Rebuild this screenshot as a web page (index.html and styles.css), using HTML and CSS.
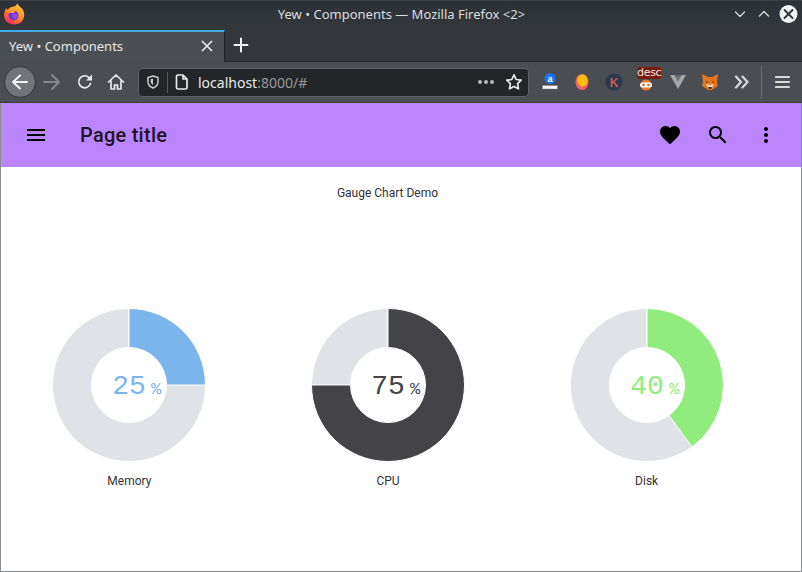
FILE: index.html
```html
<!DOCTYPE html>
<html lang="en">
<head>
<meta charset="utf-8">
<title>Yew • Components</title>
<link rel="stylesheet" href="styles.css">
</head>
<body>
<div class="window">
  <header class="titlebar">
    <svg class="ff-logo" width="22" height="22" viewBox="0 0 22 22">
      <defs>
        <linearGradient id="ffg" x1="0.8" y1="0" x2="0.2" y2="1"><stop offset="0" stop-color="#ffd43a"/><stop offset="0.5" stop-color="#ff8a2a"/><stop offset="1" stop-color="#f5225f"/></linearGradient>
      </defs>
      <path d="M14.500 0c.5 3 4 4.500 5.500 7 2.500 4.500 1 9.500-2 12.300-4 3-10.500 2.800-14-.3C1 16 .5 12 1.500 9c.4-1.500 1-3 2-4 .2 1 .5 1.500 1.200 2 1.300-2 3-3 5.300-3.300 2.500-.5 4-1.700 4.500-3.700z" fill="url(#ffg)"/>
      <circle cx="10.500" cy="12.500" r="5" fill="#6a35c9"/>
      <path d="M5 9c2-2.500 5.500-2.800 8-1.500l-2.500 2.500c-2 .3-4 0-5.500-1z" fill="#ff9a2e"/>
      <circle cx="12" cy="13" r="2.700" fill="#8f4be0"/>
    </svg>
    <span class="title-text">Yew • Components — Mozilla Firefox &lt;2&gt;</span>
    <div class="win-buttons">
      <svg class="win-btn" width="24" height="24" viewBox="0 0 24 24"><path d="M7.500 10 12 14.500 16.500 10" class="line-thin"/></svg>
      <svg class="win-btn" width="24" height="24" viewBox="0 0 24 24"><path d="M7.500 14 12 9.500 16.500 14" class="line-thin"/></svg>
      <svg class="win-btn" width="24" height="24" viewBox="0 0 24 24"><circle cx="12.500" cy="12" r="9" fill="#f2f3f3"/><path d="M8.500 8l8 8M16.500 8l-8 8" class="line-dark"/></svg>
    </div>
  </header>

  <div class="tabbar">
    <div class="tab">
      <span class="tab-label">Yew • Components</span>
      <svg width="12" height="12" viewBox="0 0 12 12"><path d="M1.500 1.500l9 9M10.500 1.500l-9 9" class="line-light"/></svg>
    </div>
    <svg class="new-tab" width="16" height="16" viewBox="0 0 16 16"><path d="M8 1.500v13M1.500 8h13" class="line-white"/></svg>
  </div>

  <nav class="navbar">
    <div class="nav-btn"><span class="back-circle">
      <svg width="20" height="20" viewBox="0 0 20 20"><path d="M17 10H3M10 3.500 3 10l7 6.500" class="line-white"/></svg>
    </span></div>
    <div class="nav-btn">
      <svg width="20" height="20" viewBox="0 0 20 20"><path d="M2 10h15M10 3l7 7-7 7" class="line-dim"/></svg>
    </div>
    <div class="nav-btn reload">
      <svg width="18" height="18" viewBox="0 0 18 18"><path d="M14.500 10.500A6 6 0 1 1 13 4.500l2 2" class="line-light"/><path d="M16 1.500v6h-6z" fill="#e8e9ea"/></svg>
    </div>
    <div class="nav-btn">
      <svg width="18" height="18" viewBox="0 0 18 18"><path d="M1.500 9 9 2l7.500 7M4 7.500V16h3.500v-4h3v4H14V7.500" class="line-light"/></svg>
    </div>
    <div class="urlbar">
      <svg class="url-shield" width="14" height="14" viewBox="0 0 14 14"><path d="M2 2.500 7 1l5 1.500v4c0 3-2 5.500-5 6.500-3-1-5-3.500-5-6.500z" class="line-gray"/><path d="M7 3.500v6.500c-1.500-.7-2.300-2-2.300-3.500V4.200z" fill="#c8c9ca"/></svg>
      <span class="url-divider"></span>
      <svg class="url-page" width="14" height="16" viewBox="0 0 14 16"><path d="M3 1h5l4 4v8.500a1.500 1.500 0 0 1-1.500 1.500h-7.500A1.500 1.500 0 0 1 1.500 13.500v-11A1.500 1.500 0 0 1 3 1zM8 1v4h4" class="line-light"/></svg>
      <span class="url-text">localhost<span class="url-dim">:8000/#</span></span>
      <span class="url-dots"><i></i><i></i><i></i></span>
      <svg class="url-star" width="18" height="18" viewBox="0 0 18 18"><path d="M9 1.800l2.200 4.700 5 .7-3.600 3.500.9 5.100L9 13.400l-4.500 2.400.9-5.100L1.800 7.200l5-.7z" class="line-light"/></svg>
    </div>
    <div class="ext">
      <svg width="20" height="20" viewBox="0 0 20 20"><circle cx="10" cy="6.500" r="5.500" fill="#1a73e8"/><text x="10" y="9.500" class="ext-a">a</text><rect x="2.500" y="13.500" width="15" height="3.500" fill="#fff" stroke="#777" stroke-width="0.500"/></svg>
    </div>
    <div class="ext">
      <svg width="20" height="20" viewBox="0 0 20 20"><ellipse cx="10" cy="10" rx="6.500" ry="8" fill="#f0616d"/><ellipse cx="10.500" cy="8.500" rx="5" ry="6" fill="#ffc107"/></svg>
    </div>
    <div class="ext">
      <svg width="20" height="20" viewBox="0 0 20 20"><circle cx="10" cy="10" r="8.500" fill="#2a3a4d"/><text x="10" y="14.500" class="ext-k">K</text></svg>
    </div>
    <div class="ext ext-desc">
      <svg width="18" height="12" viewBox="0 0 18 12"><circle cx="9" cy="6" r="5.500" fill="#e67a2b"/><rect x="3" y="3.500" width="12" height="5" rx="2.500" fill="#fff"/><circle cx="6.500" cy="6" r="1.300" fill="#d9691f"/><circle cx="11.500" cy="6" r="1.300" fill="#d9691f"/></svg>
      <span class="desc-badge">desc</span>
    </div>
    <div class="ext">
      <svg width="18" height="16" viewBox="0 0 18 16"><path d="M1 1h4.500L9 7l3.500-6H17L9 15z" fill="#a3a5a7"/><path d="M5.500 1H8l1 2 1-2h2.500L9 7z" fill="#6f7276"/></svg>
    </div>
    <div class="ext">
      <svg width="18" height="18" viewBox="0 0 18 18"><path d="M1 1l6 3h4l6-3-1 8 1 4-5 3-1 1H7l-1-1-5-3 1-4z" fill="#e2761b"/><path d="M5 11l4 1 4-1-2 4H7z" fill="#f6d7b8"/><path d="M7 14h4l-1 2H8z" fill="#3c2a1c"/><path d="M5 8l2 1-2 1zM13 8l-2 1 2 1z" fill="#3c2a1c"/></svg>
    </div>
    <div class="ext">
      <svg width="16" height="14" viewBox="0 0 16 14"><path d="M2 1.500 7 7l-5 5.500M8.500 1.500 13.500 7l-5 5.500" class="line-thick"/></svg>
    </div>
    <span class="nav-sep"></span>
    <div class="nav-btn">
      <svg width="16" height="14" viewBox="0 0 16 14"><path d="M1 2h13M1 7h13M1 12h13" class="line-thick"/></svg>
    </div>
  </nav>

  <div class="appbar">
    <svg class="app-menu" width="24" height="24" viewBox="0 0 24 24"><path d="M3 18h18v-2H3v2zm0-5h18v-2H3v2zm0-7v2h18V6H3z"/></svg>
    <span class="app-title">Page title</span>
    <div class="app-actions">
      <span class="app-action"><svg width="24" height="24" viewBox="0 0 24 24"><path d="M12 21.350l-1.450-1.320C5.400 15.360 2 12.280 2 8.500 2 5.420 4.420 3 7.500 3c1.740 0 3.410.810 4.500 2.090C13.090 3.810 14.760 3 16.500 3 19.580 3 22 5.420 22 8.500c0 3.780-3.400 6.860-8.550 11.540L12 21.350z"/></svg></span>
      <span class="app-action"><svg width="24" height="24" viewBox="0 0 24 24"><path d="M15.500 14h-.790l-.280-.270C15.410 12.590 16 11.110 16 9.500 16 5.910 13.090 3 9.500 3S3 5.910 3 9.500 5.910 16 9.500 16c1.610 0 3.090-.590 4.230-1.570l.270.280v.790l5 4.990L20.490 19l-4.990-5zm-6 0C7.010 14 5 11.990 5 9.500S7.010 5 9.500 5 14 7.010 14 9.500 11.990 14 9.500 14z"/></svg></span>
      <span class="app-action"><svg width="24" height="24" viewBox="0 0 24 24"><path d="M12 8c1.100 0 2-.9 2-2s-.9-2-2-2-2 .9-2 2 .9 2 2 2zm0 2c-1.100 0-2 .9-2 2s.9 2 2 2 2-.9 2-2-.9-2-2-2zm0 6c-1.100 0-2 .9-2 2s.9 2 2 2 2-.9 2-2-.9-2-2-2z"/></svg></span>
    </div>
  </div>

  <main class="content">
    <h1 class="chart-title">Gauge Chart Demo</h1>
    <div class="gauges">
      <figure class="gauge">
        <svg width="152" height="152" viewBox="-76 -76 152 152">
          <path class="track" d="M0-76.500A76.500 76.500 0 1 1-.01-76.500L-.01-37.500A37.500 37.500 0 1 0 0-37.500Z"/>
          <path class="seg blue" d="M0-76.500A76.500 76.500 0 0 1 76.500 0H37.500A37.500 37.500 0 0 0 0-37.500Z"/>
          <text class="val blue-t" x="0" y="9" text-anchor="middle">25</text>
          <text class="unit blue-t" x="22" y="9">%</text>
        </svg>
        <figcaption>Memory</figcaption>
      </figure>
      <figure class="gauge">
        <svg width="152" height="152" viewBox="-76 -76 152 152">
          <path class="track" d="M0-76.500A76.500 76.500 0 1 1-.01-76.500L-.01-37.500A37.500 37.500 0 1 0 0-37.500Z"/>
          <path class="seg dark" d="M0-76.500A76.500 76.500 0 1 1-76.500 0H-37.500A37.500 37.500 0 1 0 0-37.500Z"/>
          <text class="val dark-t" x="0" y="9" text-anchor="middle">75</text>
          <text class="unit dark-t" x="22" y="9">%</text>
        </svg>
        <figcaption>CPU</figcaption>
      </figure>
      <figure class="gauge">
        <svg width="152" height="152" viewBox="-76 -76 152 152">
          <path class="track" d="M0-76.500A76.500 76.500 0 1 1-.01-76.500L-.01-37.500A37.500 37.500 0 1 0 0-37.500Z"/>
          <path class="seg green" d="M0-76.500A76.500 76.500 0 0 1 44.970 61.890L22.040 30.340A37.500 37.500 0 0 0 0-37.500Z"/>
          <text class="val green-t" x="0" y="9" text-anchor="middle">40</text>
          <text class="unit green-t" x="22" y="9">%</text>
        </svg>
        <figcaption>Disk</figcaption>
      </figure>
    </div>
  </main>
</div>
</body>
</html>
```
FILE: styles.css
```css
* { box-sizing: border-box; }
html, body { margin: 0; padding: 0; }
body { width: 802px; height: 572px; overflow: hidden; background: #fff; font-family: "Noto Sans", sans-serif; }

.window { width: 802px; height: 572px; display: flex; flex-direction: column; border: 1px solid #8b8e91; border-top: 0; background: #fff; }

svg path[class^="line"] { fill: none; stroke-linecap: round; stroke-linejoin: round; }
.line-light { stroke: #e8e9ea; stroke-width: 1.700; }
.line-thin { stroke: #dfe0e1; stroke-width: 1.200; }
.line-dark { stroke: #2f3337; stroke-width: 1.800; }
.line-white { stroke: #f4f5f5; stroke-width: 2; }
.line-dim { stroke: #85888b; stroke-width: 2; }
.line-gray { stroke: #c8c9ca; stroke-width: 1.500; }
.line-thick { stroke: #d8d9da; stroke-width: 2.200; }

/* Title bar */
.titlebar { height: 30px; flex: none; margin: 0 -1px; display: grid; grid-template-columns: 1fr auto 1fr; align-items: center; padding: 0 2px 3px 3px; background: linear-gradient(#2c3137, #34383c); border-top: 1px solid #3d4147; }
.ff-logo { display: block; }
.title-text { color: #dcdedf; font-size: 13px; line-height: 26px; white-space: nowrap; }
.win-buttons { display: flex; justify-self: end; }
.win-btn { display: block; }

/* Tab bar */
.tabbar { height: 32px; flex: none; margin: 0 -1px; display: flex; align-items: stretch; background: #34383c; border-bottom: 1px solid #1f2225; }
.tab { width: 225px; margin-bottom: -1px; display: flex; align-items: center; justify-content: space-between; padding: 0 11px 2px 9px; background: #4b4f54; border-top: 2px solid #3daee9; border-right: 1px solid #1f2225; }
.tab-label { color: #e6e7e8; font-size: 13px; white-space: nowrap; }
.new-tab { align-self: center; margin: -1px 0 0 8px; }

/* Navigation bar */
.navbar { height: 41px; flex: none; margin: 0 -1px; display: flex; align-items: center; padding: 0 3px 0 4px; background: #4a4e53; border-bottom: 1px solid #3a3d41; }
.nav-btn, .ext { width: 32px; height: 32px; flex: none; display: flex; align-items: center; justify-content: center; }
.reload svg { margin-left: 2px; }
.back-circle { width: 32px; height: 32px; border-radius: 50%; background: #717478; border: 1px solid #313438; display: flex; align-items: center; justify-content: center; }
.urlbar { width: 391px; height: 29px; flex: none; margin: 0 5px 0 6px; display: flex; align-items: center; background: #232629; border: 1px solid #5e6165; border-radius: 4px; color: #e8e9ea; }
.url-shield { margin-left: 7px; flex: none; }
.url-divider { width: 1px; height: 21px; background: #55585c; margin: 0 7px; flex: none; }
.url-page { flex: none; margin-left: 0; }
.url-text { font-size: 14px; margin-left: 9px; flex: 1; white-space: nowrap; }
.url-dim { color: #96989a; }
.url-dots { display: flex; gap: 2px; flex: none; margin-right: 11px; }
.url-dots i { width: 4px; height: 4px; border-radius: 50%; background: #b8babb; display: block; }
.url-star { margin-right: 5px; flex: none; }
.ext { position: relative; }
.ext-a { font: bold 9px "Liberation Sans", sans-serif; fill: #fff; text-anchor: middle; }
.ext-k { font: bold 12px "Liberation Sans", sans-serif; fill: #c85a55; text-anchor: middle; }
.ext-desc svg { margin: 6px 0 0 -1px; }
.desc-badge { position: absolute; top: 1px; left: 7px; width: 24px; height: 12px; border-radius: 2px; background: #7a1c0c; color: #f3e6e3; font: 11px/11px "DejaVu Sans", sans-serif; letter-spacing: -0.300px; text-align: center; }
.nav-sep { width: 1px; height: 33px; background: #6b6e72; flex: none; margin: 0 5px 0 3px; }

/* App bar */
.appbar { height: 64px; flex: none; display: flex; align-items: center; padding: 0 11px 0 23px; background: #bb86fc; }
.appbar svg { display: block; fill: #000; }
.app-menu { flex: none; }
.app-title { margin-left: 32px; font: 500 20px/32px Roboto, sans-serif; letter-spacing: 0.250px; color: #1f1329; flex: 1; }
.app-actions { display: flex; flex: none; }
.app-action { width: 48px; height: 48px; display: flex; align-items: center; justify-content: center; }

/* Chart */
.content { flex: 1; width: 776px; margin-left: -1px; font-family: Roboto, sans-serif; }
.chart-title { margin: 19px 0 0; font: 400 12px/14px Roboto, sans-serif; color: #333; text-align: center; padding-right: 1px; }
.gauges { display: grid; grid-template-columns: repeat(3, 1fr); margin-top: 109px; }
.gauge { margin: 0; display: flex; flex-direction: column; align-items: center; }
.gauge svg { display: block; overflow: visible; }
.gauge figcaption { margin-top: 13px; font: 400 12px/14px Roboto, sans-serif; color: #333; }
.track { fill: #dfe2e6; stroke: #fff; stroke-width: 1; }
.seg { stroke: #fff; stroke-width: 1; }
.blue { fill: #7cb5ec; }
.dark { fill: #434348; }
.green { fill: #90ed7d; }
.val { font: 28px "Liberation Mono", monospace; }
.unit { font: 17px "Liberation Mono", monospace; }
.blue-t { fill: #7cb5ec; }
.dark-t { fill: #434348; }
.green-t { fill: #90ed7d; }
```
